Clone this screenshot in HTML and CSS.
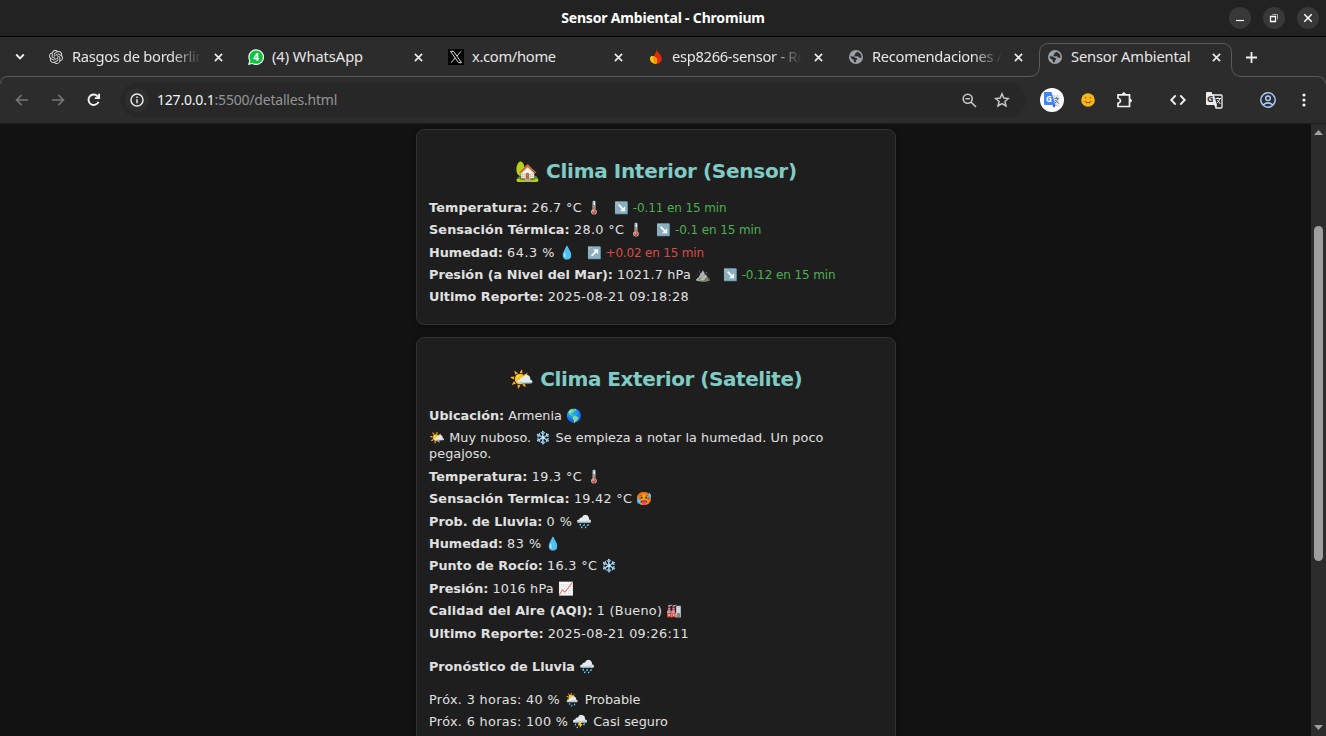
FILE: index.html
```html
<!DOCTYPE html>
<html lang="es">
<head>
<meta charset="utf-8">
<title>Sensor Ambiental</title>
<link rel="stylesheet" href="styles.css">
</head>
<body>
<svg class="defs" width="0" height="0">
  <symbol id="close" viewBox="0 0 10 10"><path d="M1 1l8 8M9 1L1 9" fill="none" stroke="#e8e8e8" stroke-width="1.9"/></symbol>
  <symbol id="globe" viewBox="2 2 20 20"><circle cx="12" cy="12" r="10" fill="#9aa0a6"/><path fill="#2c2c2c" d="M4.300 10.800L8 11.300q2.200.2 3 1.700l2.500.8v1.700l-1.500 1v2.800q-1.500.3-3-.2v-2.600L6 14.500q-1.800-1.600-1.700-3.700z"/><path fill="#2c2c2c" d="M14.500 4.500l-3.500 2.200v1.800l-1.800 1.300 2.500 1.600 3.300-.4 1.300 1.900h3.400q.4-2.200-.7-4.300-1.600-2.900-4.500-4.100z"/></symbol>
</svg>
<header class="titlebar">
  <div class="window-title">Sensor Ambiental - Chromium</div>
  <div class="window-buttons">
    <span><svg width="22" height="22"><path d="M7 13.500h8" stroke="#fff" stroke-width="1.200"/></svg></span>
    <span><svg width="22" height="22" fill="none"><path d="M7.500 9.500h5v5h-5z" stroke="#fff" stroke-width="1.300"/><path d="M9.500 7.500h5v5" stroke="#aaa"/></svg></span>
    <span><svg width="22" height="22"><path d="M7.300 7.300l7.400 7.400M14.700 7.300l-7.400 7.400" stroke="#fff" stroke-width="1.500"/></svg></span>
  </div>
</header>
<nav class="tabs">
  <svg class="tab-outline" width="1326" height="50" fill="none"><path d="M0.500 46.500Q1 39.500 8.500 39.500H1029Q1039.500 39.500 1039.500 29V16Q1039.500 6.500 1049 6.500H1222Q1231.500 6.500 1231.500 16V29Q1231.500 39.500 1242 39.500H1317.500Q1325 39.500 1325.500 46.500" stroke="#5b5b5b"/></svg>
  <svg class="tab-menu" width="10" height="8"><path d="M1.200 1.500L5 5.300 8.800 1.500" fill="none" stroke="#eee" stroke-width="1.900"/></svg>
  <div class="tab">
    <svg class="favicon openai" viewBox="0 0 24 24" fill="#dedede"><path d="M22.282 9.821a5.985 5.985 0 0 0-.516-4.910 6.046 6.046 0 0 0-6.510-2.900A6.065 6.065 0 0 0 4.981 4.182a5.985 5.985 0 0 0-3.998 2.900 6.046 6.046 0 0 0 .743 7.097 5.980 5.980 0 0 0 .510 4.911 6.051 6.051 0 0 0 6.515 2.900A5.985 5.985 0 0 0 13.260 24a6.056 6.056 0 0 0 5.772-4.206 5.990 5.990 0 0 0 3.998-2.900 6.056 6.056 0 0 0-.747-7.073zM13.260 22.430a4.476 4.476 0 0 1-2.876-1.041l.141-.080 4.779-2.759a.795.795 0 0 0 .393-.681v-6.737l2.020 1.169a.071.071 0 0 1 .038.052v5.583a4.504 4.504 0 0 1-4.495 4.494zM3.600 18.304a4.471 4.471 0 0 1-.535-3.014l.142.085 4.783 2.759a.771.771 0 0 0 .780 0l5.843-3.369v2.332a.080.080 0 0 1-.033.062L9.740 19.950a4.499 4.499 0 0 1-6.140-1.646zM2.341 7.896a4.485 4.485 0 0 1 2.366-1.973V11.600a.766.766 0 0 0 .388.677l5.814 3.354-2.020 1.169a.076.076 0 0 1-.071 0l-4.830-2.787A4.504 4.504 0 0 1 2.341 7.872zm16.597 3.855l-5.843-3.387L15.114 7.200a.076.076 0 0 1 .071 0l4.830 2.791a4.494 4.494 0 0 1-.676 8.105v-5.678a.790.790 0 0 0-.401-.667zm2.010-3.023l-.141-.085-4.774-2.782a.776.776 0 0 0-.785 0L9.409 9.230V6.897a.066.066 0 0 1 .028-.061l4.830-2.787a4.499 4.499 0 0 1 6.681 4.660zM8.307 12.863l-2.020-1.164a.080.080 0 0 1-.038-.057V6.075a4.499 4.499 0 0 1 7.376-3.454l-.142.081L8.704 5.460a.795.795 0 0 0-.393.681zm1.097-2.366l2.602-1.500 2.607 1.500v2.999l-2.597 1.500-2.607-1.500z"/></svg>
    <span class="label fade tight">Rasgos de borderlin</span><svg class="close"><use href="#close"/></svg>
  </div>
  <div class="tab">
    <svg class="favicon" viewBox="0 0 16 16"><path d="M0 16l1.200-4.200A7.900 7.900 0 1 1 4.300 15z" fill="#f2fff5"/><path d="M1.600 14.400l.8-2.900A6.700 6.700 0 1 1 4.500 13.700z" fill="#12c143"/><text x="8" y="11.700" class="badge-number">4</text></svg>
    <span class="label app">(4) WhatsApp</span><svg class="close"><use href="#close"/></svg>
  </div>
  <div class="tab">
    <svg class="favicon" viewBox="0 0 16 16"><path d="M0 0h16v16H0z" fill="#000"/><path d="M2.500 2.300h3l8 11.400h-3zM13 2.300L8.900 7M7.100 9.100L3 13.700" fill="none" stroke="#ddd"/></svg>
    <span class="label tight">x.com/home</span><svg class="close"><use href="#close"/></svg>
  </div>
  <div class="tab">
    <svg class="favicon" viewBox="0 0 16 16"><path d="M8.600 1C9.600 3.200 13.700 5.700 13.700 9.700a5 5 0 0 1-5.400 5.100C5.500 14.500 4.800 12 5.200 9.200 5.600 6 8 4 8.600 1z" fill="#dd2c00"/><path d="M3 7.200C5 6.200 9 8 9.200 11c.1 1.600-.4 3-.9 3.800C5 14.900 2.200 13 2 10.300 1.900 9 2.300 8 3 7.200z" fill="#ffc400"/><path d="M5.400 7.800C7.600 8 9 9.600 9.200 11c.1 1.600-.4 3-.9 3.800C5.400 14.400 4.900 10.600 5.400 7.800z" fill="#ff9100"/></svg>
    <span class="label fade tight">esp8266-sensor - Re</span><svg class="close"><use href="#close"/></svg>
  </div>
  <div class="tab">
    <svg class="favicon globe"><use href="#globe"/></svg>
    <span class="label fade tight">Recomendaciones A</span><svg class="close"><use href="#close"/></svg>
  </div>
  <div class="tab active">
    <svg class="favicon globe"><use href="#globe"/></svg>
    <span class="label">Sensor Ambiental</span><svg class="close"><use href="#close"/></svg>
  </div>
  <svg class="new-tab" width="11" height="11"><path d="M5.500 0v11M0 5.500h11" stroke="#eee" stroke-width="1.800"/></svg>
</nav>
<div class="toolbar">
  <svg class="back" width="14" height="12" fill="none" stroke="#777" stroke-width="1.600"><path d="M13 6H1.500M6.500 1L1.500 6l5 5"/></svg>
  <svg class="forward" width="14" height="12" fill="none" stroke="#777" stroke-width="1.600"><path d="M1 6h11.500M7.500 1l5 5-5 5"/></svg>
  <svg class="reload" width="14" height="14" fill="none" stroke="#f1f1f1" stroke-width="1.900"><path d="M11.500 8.800A5.200 5.200 0 1 1 10.600 3.300L12 4.700M12.100 .8v4.300H7.800"/></svg>
  <div class="address">
    <span class="info"><svg width="14" height="14" fill="none" stroke="#e8e8e8" stroke-width="1.500"><circle cx="7" cy="7" r="6"/><path d="M7 6.300v4M7 3.600v1.500"/></svg></span>
    <span class="url"><b>127.0.0.1</b>:5500/detalles.html</span>
    <svg class="zoom" width="15" height="15" fill="none" stroke="#c7c7c7" stroke-width="1.600"><circle cx="5.700" cy="5.700" r="4.500"/><path d="M9 9l5 5M3.500 5.700h4.400"/></svg>
    <svg class="star" width="16" height="16" fill="none" stroke="#c7c7c7" stroke-width="1.500"><path d="M8 1.800l1.800 4.300 4.600.4-3.500 3 1.100 4.500L8 11.600 4 14l1.100-4.500-3.500-3 4.600-.4z"/></svg>
  </div>
  <div class="extensions">
    <svg class="translate" width="24" height="24"><circle cx="12" cy="12" r="12" fill="#fff"/><path d="M10 7h9.500v12H14z" fill="#dce0e4"/><path d="M4 4h7.500l4 13H5q-1 0-1-1z" fill="#4285f4"/><path d="M12.500 17h3L14 20z" fill="#3949c6"/><path d="M14.300 10.500h4.500M16.500 9v1.500M17.800 10.700q-.5 3-2.800 4.300M15 12l3.500 3.500" stroke="#607d8b" fill="none"/><text x="6" y="13.500" class="g-small">G</text></svg>
    <svg class="face" width="14" height="14"><circle cx="7" cy="7" r="6.800" fill="#f9b91a"/><path d="M4.800 3.800v1.900M9.200 3.800v1.900M3.500 8.500q3.500 2.400 7 0M5.500 8.700v1.800M8.500 8.700v1.800" fill="none" stroke="#a55b10"/></svg>
    <svg class="puzzle" width="18" height="18" fill="none" stroke="#f1f1f1" stroke-width="1.700"><path d="M2 3.800h11.500v11.700H2v-3.200q2.500-.8 2.500-2.600T2 7z"/><path d="M6.200 3l1.600-1.700L9.400 3zM14.300 8l1.700 1.600-1.700 1.600z" fill="#f1f1f1" stroke-width="1"/></svg>
    <svg class="code" width="16" height="12" fill="none" stroke="#f1f1f1" stroke-width="1.900"><path d="M5.700 1.300L1.300 6l4.400 4.700M10.300 1.300L14.700 6l-4.400 4.700"/></svg>
    <svg class="translate-mono" width="18" height="18"><path d="M8 4h8q1 0 1 1v11q0 1-1 1h-5z" fill="#2c2c2c" stroke="#eee" stroke-width="1.300"/><path d="M2 1h4.500l1 2.500h1.300L12 14H2q-1 0-1-1V2q0-1 1-1z" fill="#eee"/><path d="M9 14h3l-1 3z" fill="#eee"/><path d="M10.500 7.500h5.500M13 6.300v1.200M14.800 8q-.6 2.500-3 4M12.300 9l3.200 4" stroke="#eee" fill="none"/><text x="2" y="11" class="g-mono">G</text></svg>
    <svg class="profile" width="16" height="16" fill="none" stroke="#a8c7fa" stroke-width="1.500"><circle cx="8" cy="8" r="7.200"/><circle cx="8" cy="6.300" r="2.300"/><path d="M3 13q5-4.300 10 0"/></svg>
    <svg class="more" width="4" height="14" fill="#f1f1f1"><circle cx="2" cy="2" r="1.600"/><circle cx="2" cy="7" r="1.600"/><circle cx="2" cy="12" r="1.600"/></svg>
  </div>
</div>
<div class="viewport">
  <main>
    <section class="card">
      <h2>🏡 Clima Interior (Sensor)</h2>
      <p><b class="term">Temperatura:</b> <span class="reading">26.7 °C</span> 🌡️ <span class="trend down">↘️ -0.11 en 15 min</span></p>
      <p><b class="term">Sensación Térmica:</b> <span class="reading">28.0 °C</span> 🌡️ <span class="trend down">↘️ -0.1 en 15 min</span></p>
      <p><b>Humedad:</b> <span class="percent">64.3 %</span> 💧 <span class="trend up">↗️ +0.02 en 15 min</span></p>
      <p><b>Presión (a Nivel del Mar):</b> <span class="pressure">1021.7 hPa</span> ⛰️ <span class="trend down">↘️ -0.12 en 15 min</span></p>
      <p><b>Ultimo Reporte:</b> <span class="stamp">2025-08-21 09:18:28</span></p>
    </section>
    <section class="card">
      <h2 class="outdoor">🌤️ Clima Exterior (Satelite)</h2>
      <p><b>Ubicación:</b> Armenia 🌎</p>
      <p class="summary">🌤️ Muy nuboso. ❄️ Se empieza a notar la humedad. Un poco pegajoso.</p>
      <p><b class="term">Temperatura:</b> <span class="reading">19.3 °C</span> 🌡️</p>
      <p><b class="term">Sensación Termica:</b> <span class="stamp">19.42 °C</span> 🥵</p>
      <p><b>Prob. de Lluvia:</b> <span class="percent">0 %</span> 🌧️</p>
      <p><b>Humedad:</b> <span class="percent">83 %</span> 💧</p>
      <p><b>Punto de Rocío:</b> <span class="reading">16.3 °C</span> ❄️</p>
      <p><b>Presión:</b> <span class="pressure">1016 hPa</span> 📈</p>
      <p><b class="term">Calidad del Aire (AQI):</b> <span class="stamp">1 (Bueno)</span> 🏭</p>
      <p><b>Ultimo Reporte:</b> <span class="stamp">2025-08-21 09:26:11</span></p>
      <h4>Pronóstico de Lluvia 🌧️</h4>
      <p><span class="forecast">Próx. 3 horas: 40 % 🌦️</span> Probable</p>
      <p><span class="forecast">Próx. 6 horas: 100 % ⛈️</span> Casi seguro</p>
    </section>
  </main>
  <div class="scrollbar">
    <svg width="9" height="5"><path d="M0 5L4.500 0 9 5z" fill="#a0a0a0"/></svg>
    <div class="thumb"></div>
    <svg class="arrow-down" width="9" height="5"><path d="M0 0h9L4.500 5z" fill="#a0a0a0"/></svg>
  </div>
</div>
</body>
</html>
```
FILE: styles.css
```css
* { box-sizing: border-box; }
body { margin: 0; width: 1326px; height: 736px; overflow: hidden; display: flex; flex-direction: column; background: #121212; font-family: "Noto Sans", sans-serif; }
svg { display: block; flex: none; }
.defs { position: absolute; }

.titlebar { height: 37px; flex: none; background: #222; border-bottom: 1px solid #000; display: grid; grid-template-columns: 1fr auto 1fr; align-items: center; }
.window-title { grid-column: 2; color: #fff; font-size: 14px; font-weight: 700; letter-spacing: -.18px; line-height: 36px; }
.window-buttons { display: flex; gap: 12px; justify-self: end; padding-right: 7px; }
.window-buttons span { width: 22px; height: 22px; border-radius: 50%; background: #383838; }

.tabs { position: relative; height: 40px; flex: none; background: #2c2c2c; display: flex; align-items: center; }
.tab-outline { position: absolute; left: 0; top: 0; z-index: 1; pointer-events: none; }
.tab-menu { margin: 0 23px 0 15px; }
.tab { width: 200px; flex: none; display: flex; align-items: center; }
.favicon { width: 16px; height: 16px; margin-right: 8px; }
.favicon.openai { width: 14px; height: 14px; margin: 0 9px 0 1px; }
.favicon.globe { width: 14px; height: 14px; margin: 0 9px 0 1px; }
.label { width: 130px; overflow: hidden; white-space: nowrap; color: #e6e6e6; font-size: 14.700px; letter-spacing: -.16px; line-height: 24px; padding-bottom: 2px; }
.label.app { letter-spacing: -.06px; }
.label.tight { letter-spacing: -.3px; }
.fade { -webkit-mask-image: linear-gradient(90deg, #000 100px, transparent 130px); mask-image: linear-gradient(90deg, #000 100px, transparent 130px); }
.close { width: 9px; height: 9px; margin-left: 11.500px; }
.tab.active { width: 198px; margin-left: -1px; }
.tab.active .close { margin-left: 10.500px; }
.badge-number { fill: #fff; font: 700 10px "Noto Sans", sans-serif; text-anchor: middle; }
.new-tab { margin-left: 1px; }

.toolbar { height: 47px; flex: none; background: #2c2c2c; border-bottom: 1px solid #1b1b1b; display: flex; align-items: center; }
.back { margin: 0 22px 0 15px; }
.reload { margin: 0 19px 0 22px; }
.address { width: 906px; height: 34px; flex: none; border-radius: 17px; background: #272727; display: flex; align-items: center; }
.info { width: 24px; height: 24px; border-radius: 50%; background: #2e2e2e; display: flex; align-items: center; justify-content: center; margin: 0 8px 0 5px; }
.url { flex: 1; color: #949494; font-size: 14px; letter-spacing: -.2px; line-height: 20px; padding-bottom: 1px; white-space: nowrap; }
.url b { color: #f4f4f4; font-weight: 400; }
.zoom { margin-right: 17px; }
.star { margin-right: 16px; }
.extensions { display: flex; align-items: center; margin-left: 14px; }
.face { margin-left: 17px; }
.puzzle { margin-left: 21px; }
.code { margin-left: 36px; }
.translate-mono { margin-left: 19px; }
.profile { margin-left: 37px; }
.more { margin-left: 26px; }
.g-small { fill: #fff; font: 700 8px "Noto Sans", sans-serif; }
.g-mono { fill: #303030; font: 700 9px "Noto Sans", sans-serif; }

.viewport { flex: 1; min-height: 0; display: flex; background: #121212; }
main { flex: 1; height: 612px; overflow: hidden; display: flex; flex-direction: column; align-items: center; gap: 12px; padding-top: 5px; }
.card { width: 480px; flex: none; margin-left: 1px; background: #1e1e1e; border: 1px solid #333; border-radius: 8px; padding: 12px 12px 12.600px; box-shadow: 0 2px 5px rgba(0, 0, 0, .4); color: #e0e0e0; font: 12.800px/16px "DejaVu Sans", "Noto Color Emoji", sans-serif; }
.card h2 { margin: 17px 0 16.750px; color: #80cbc4; font-size: 20px; line-height: 24px; text-align: center; letter-spacing: -.27px; word-spacing: -.4px; }
.card h2.outdoor { letter-spacing: -.4px; }
.card p { margin: 0 0 6.400px; }
.card h4 { margin: 17px 0; font-size: 12.800px; letter-spacing: -.04px; }
.term { letter-spacing: .12px; }
.reading { letter-spacing: .36px; }
.percent { letter-spacing: .55px; }
.pressure { letter-spacing: .2px; }
.stamp { letter-spacing: .28px; }
.summary { letter-spacing: .07px; }
.forecast { letter-spacing: .34px; }
.trend { margin-left: 8px; font-size: 12px; letter-spacing: -.1px; }
.down { color: #4caf50; }
.up { color: #dc4a47; letter-spacing: -.18px; }

.scrollbar { width: 15px; background: #2c2c2c; display: flex; flex-direction: column; align-items: center; padding: 6px 0; }
.thumb { width: 9px; height: 335px; margin-top: 91px; border-radius: 4.500px; background: #9f9f9f; }
.arrow-down { margin-top: auto; }
```
